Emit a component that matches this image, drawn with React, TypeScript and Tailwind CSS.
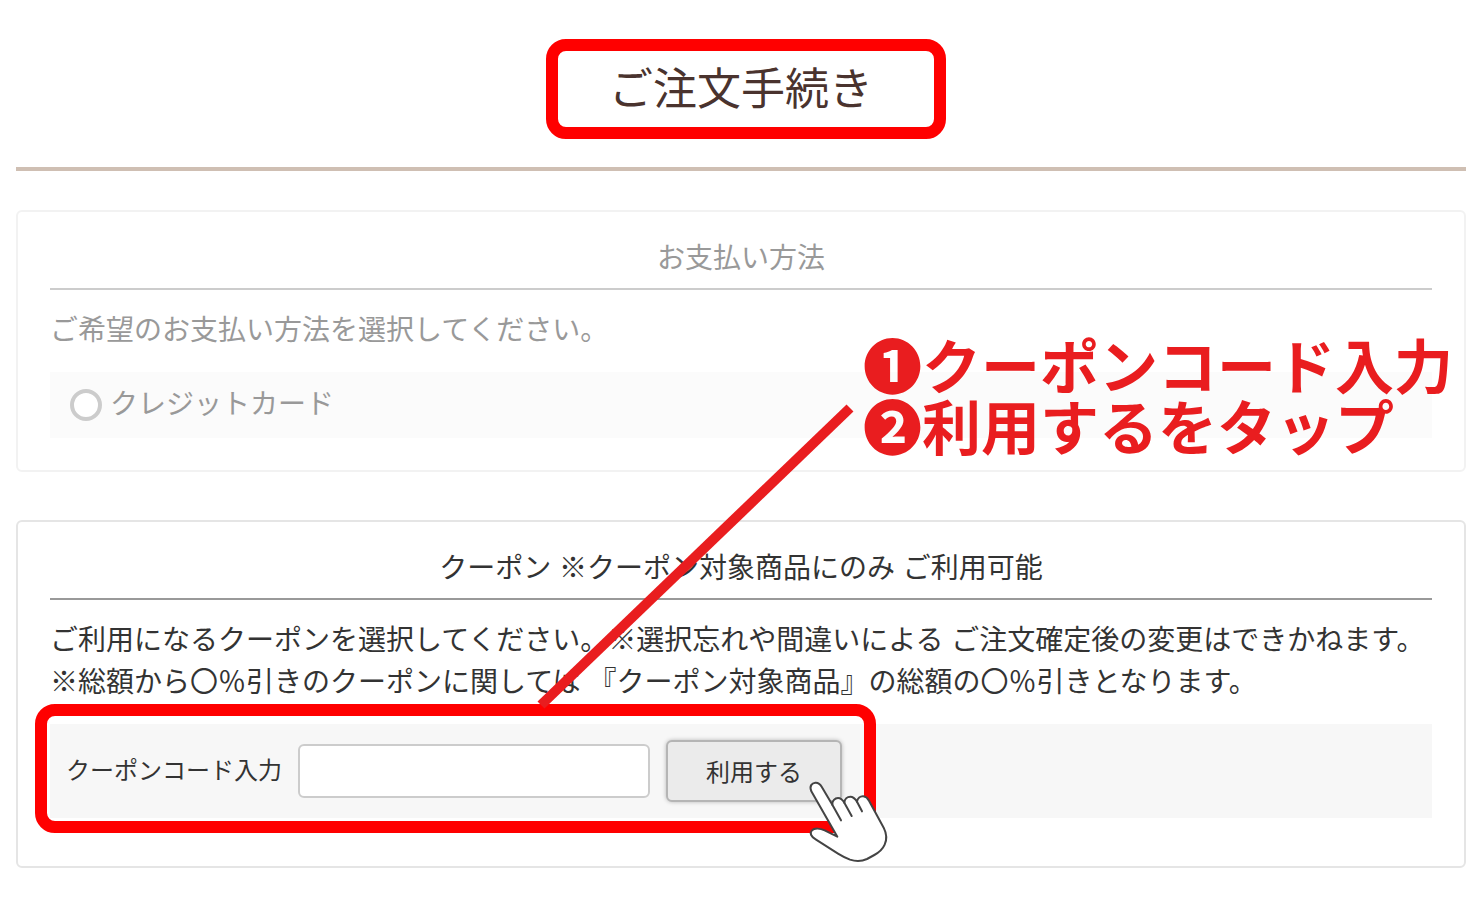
import type { ReactNode } from 'react';

const HandPointer = () => (
    <svg
        className="absolute -right-[49px] -bottom-[63px] w-[84px] h-[87px]"
        viewBox="501 264 252 261"
        fill="white"
        stroke="#444"
        strokeWidth="6"
        strokeLinecap="round"
        strokeLinejoin="round"
        aria-hidden="true"
    >
        <path d="M592 440 L514 304 C507 288 516 279 526 278 C536 277 541 283 545 290 L577 344 C576 332 585 324 594 324 C603 324 608 330 613 338 C614 327 622 320 631 320 C641 320 646 327 651 335 C653 325 661 318 670 319 C679 320 683 325 687 332 L731 413 C740 431 741 449 734 464 C727 480 716 488 703 495 L681 507 C664 515 648 515 630 509 C615 503 605 498 594 491 L527 448 C513 440 509 430 515 422 C523 413 541 415 554 421 Z" />
        <path d="M577 344 L603 391 M613 338 L635 378 M651 335 L666 364" fill="none" />
    </svg>
);

type SectionProps = {
    title: string;
    className: string;
    ruleClassName: string;
    children: ReactNode;
};

const Section = ({ title, className, ruleClassName, children }: SectionProps) => (
    <section className={`relative border-2 rounded-md px-8 pt-[26px] ${className}`}>
        <h2 className={`text-[28px] leading-[42px] text-center pb-2 border-b-2 ${ruleClassName}`}>
            {title}
        </h2>
        {children}
    </section>
);

export default function App() {
    return (
        <main className="bg-white text-[#333] px-4 pb-9 font-['Liberation_Sans','Noto_Sans_CJK_JP',sans-serif]">

            {/* Page title */}
            <header className="flex justify-center pt-[57px] pb-11 border-b-4 border-[#cfbfb3]">
                <h1 className="relative text-[44px] leading-[66px] text-[#4a332e]">
                    ご注文手続き
                    <span className="absolute -top-[18px] -bottom-4 -left-[63px] -right-[73px] border-12 border-[#ff0000] rounded-[20px]" />
                </h1>
            </header>

            {/* Payment method */}
            <Section
                title="お支払い方法"
                className="mt-[39px] pb-8 text-[#999] border-[#f2f2f2]"
                ruleClassName="border-[#ccc]"
            >
                <p className="my-5 text-[28px] leading-[42px]">ご希望のお支払い方法を選択してください。</p>
                <div className="px-5 py-3 bg-[#fbfbfb]">
                    <label className="flex items-center gap-2 text-[28px] leading-[42px]">
                        <input
                            type="radio"
                            name="payment"
                            className="appearance-none w-8 h-8 rounded-full border-4 border-[#ccc] bg-white"
                        />
                        クレジットカード
                    </label>
                </div>

                {/* Step callout */}
                <p className="absolute z-10 right-[11px] top-[121px] text-[59px] leading-[61px] font-bold text-[#e91d1f] whitespace-nowrap font-['Noto_Sans_CJK_JP',sans-serif]">
                    ❶クーポンコード入力
                    <br />
                    ❷利用するをタップ
                </p>
                <svg
                    className="absolute z-10 right-[609px] top-[190px] w-[320px] h-[310px]"
                    viewBox="0 0 320 310"
                    stroke="#e91d1f"
                    strokeWidth="10"
                    aria-hidden="true"
                >
                    <path d="M6 303 L315 6" />
                </svg>
            </Section>

            {/* Coupon */}
            <Section
                title="クーポン ※クーポン対象商品にのみ ご利用可能"
                className="mt-12 pb-12 border-[#e5e5e5]"
                ruleClassName="border-[#999]"
            >
                <p className="my-5 text-[28px] leading-[42px]">
                    ご利用になるクーポンを選択してください。※選択忘れや間違いによる ご注文確定後の変更はできかねます。
                    <br />
                    ※総額から〇％引きのクーポンに関しては 『クーポン対象商品』の総額の〇％引きとなります。
                </p>
                <form className="bg-[#f7f7f7]">
                    <div className="relative w-fit flex items-center gap-4 p-4 text-[24px] leading-[36px]">
                        <span className="absolute -top-5 -bottom-[15px] -left-[15px] -right-[18px] border-12 border-[#ff0000] rounded-[20px] pointer-events-none" />
                        <label htmlFor="coupon">クーポンコード入力</label>
                        <input
                            id="coupon"
                            type="text"
                            className="w-[352px] h-[54px] px-3 border-2 border-[#ccc] rounded-md bg-white"
                        />
                        <div className="relative">
                            <button
                                type="button"
                                className="w-44 h-[62px] pt-1 border-2 border-[#b5b5b5] rounded-md bg-[#ebebeb] shadow-[0_0_4px_rgba(0,0,0,0.25)]"
                            >
                                利用する
                            </button>
                            <HandPointer />
                        </div>
                    </div>
                </form>
            </Section>

        </main>
    );
}
